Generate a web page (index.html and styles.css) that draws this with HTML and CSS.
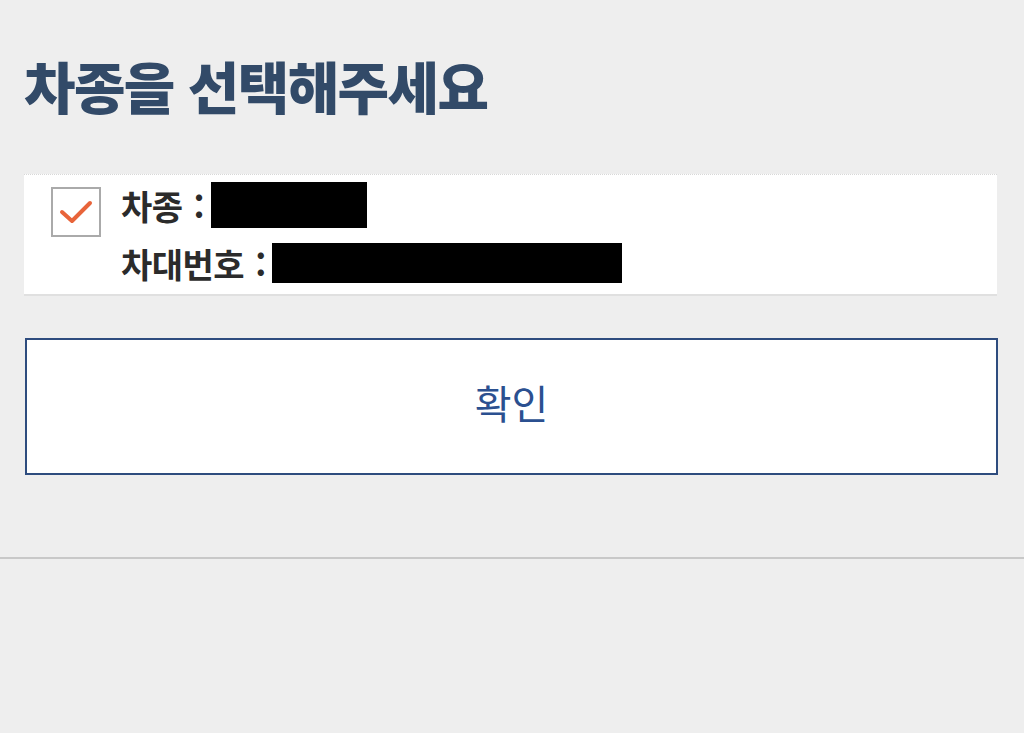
FILE: index.html
```html
<!DOCTYPE html>
<html lang="ko">
<head>
<meta charset="utf-8">
<link rel="stylesheet" href="styles.css">
</head>
<body>
<div class="page">
  <h1 class="title">차종을 선택해주세요</h1>
  <div class="card">
    <div class="check">
      <svg width="36" height="26" viewBox="0 0 36 26"><path d="M4 13 L14 22 L32 4" fill="none" stroke="#e8643a" stroke-width="4" stroke-linecap="round" stroke-linejoin="round"/></svg>
    </div>
    <div class="info">
      <div class="row"><span class="label">차종</span><span class="colon">:</span><span class="mask mask1"></span></div>
      <div class="row"><span class="label">차대번호</span><span class="colon">:</span><span class="mask mask2"></span></div>
    </div>
  </div>
  <button class="confirm">확인</button>
</div>
<div class="divider"></div>
</body>
</html>
```
FILE: styles.css
```css
html, body { margin: 0; padding: 0; }
body {
  background: #eeeeee;
  font-family: "Noto Sans CJK KR", "Noto Sans", sans-serif;
  width: 1024px;
  height: 733px;
  overflow: hidden;
}
.page {
  padding: 0 27px 0 24px;
}
.title {
  margin: 0;
  padding-top: 48px;
  height: 174px;
  box-sizing: border-box;
  font-size: 56px;
  font-weight: 900;
  letter-spacing: -1.6px;
  color: #324a68;
  line-height: 74px;
}
.card {
  background: #fff;
  border-top: 1px dotted #d8d8d8;
  border-bottom: 2px solid #e0e0e0;
  height: 122px;
  box-sizing: border-box;
  display: flex;
  align-items: flex-start;
  padding: 12px 0 0 27px;
}
.check {
  width: 50px;
  height: 50px;
  box-sizing: border-box;
  border: 2px solid #aaaaaa;
  display: flex;
  align-items: center;
  justify-content: center;
}
.info {
  margin-left: 20px;
  margin-top: -5px;
  display: flex;
  flex-direction: column;
  gap: 12px;
}
.row {
  display: flex;
  align-items: center;
  height: 46px;
}
.label {
  font-size: 34px;
  font-weight: 700;
  color: #2b2b2b;
  letter-spacing: -0.5px;
  white-space: nowrap;
}
.colon {
  font-size: 34px;
  font-weight: 700;
  color: #2b2b2b;
  margin-left: 11px;
}
.mask { background: #000; display: block; }
.mask1 { width: 156px; height: 46px; margin-left: 6px; }
.mask2 { width: 350px; height: 40px; margin-left: 6px; }
.confirm {
  display: block;
  margin-top: 42px;
  width: 973px;
  height: 137px;
  margin-left: 1px;
  background: #fff;
  border: 2px solid #2e4c7e;
  font-family: "Noto Sans CJK KR", "Noto Sans", sans-serif;
  font-size: 40px;
  color: #2b5090;
  padding: 0 0 10px 0;
}
.divider {
  margin-top: 82px;
  height: 2px;
  background: #c8c8c8;
}
```
